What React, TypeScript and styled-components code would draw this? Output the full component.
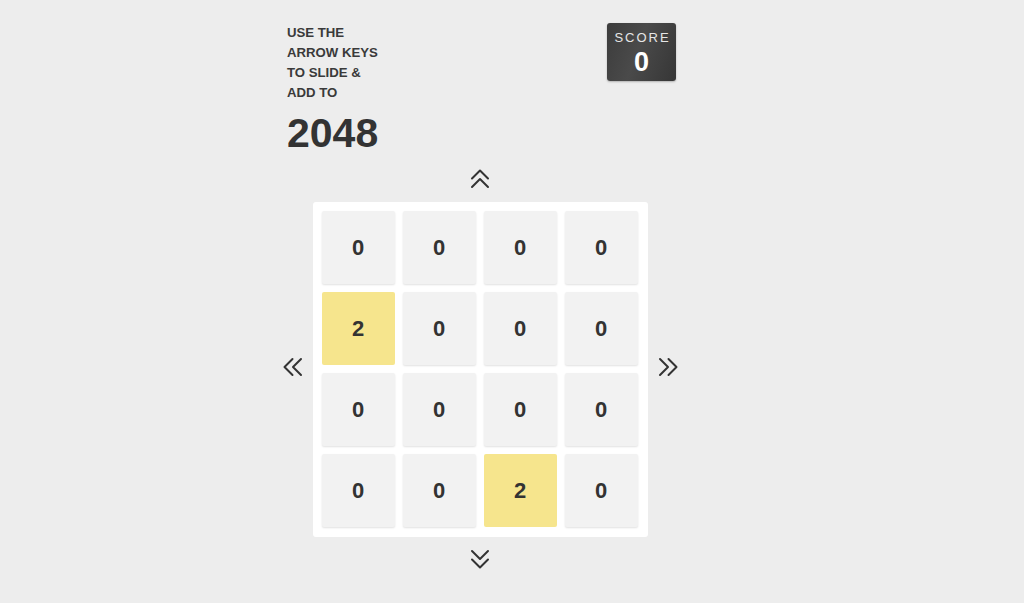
import React from 'react'
import styled, { createGlobalStyle } from 'styled-components'

const GlobalStyle = createGlobalStyle`
    body {
        margin: 0;
        background: #ededed;
        font-family: "Liberation Sans", Arial, sans-serif;
        color: #333;
    }
`

const board = [
    [0, 0, 0, 0],
    [2, 0, 0, 0],
    [0, 0, 0, 0],
    [0, 0, 2, 0],
]

type Dir = 'up' | 'down' | 'left' | 'right'

const rotation: Record<Dir, number> = { up: 0, right: 90, down: 180, left: 270 }

const Chevrons = ({ dir }: { dir: Dir }) => (
    <svg width="20" height="20" viewBox="0 0 20 20" fill="none">
        <g
            transform={`rotate(${rotation[dir]} 10 10)`}
            stroke="#333"
            strokeWidth="2"
            strokeLinecap="round"
            strokeLinejoin="round"
        >
            <path d="M2 9.5 L10 1.5 L18 9.5" />
            <path d="M2 18 L10 10 L18 18" />
        </g>
    </svg>
)

const App = () => {
    return (
        <>
            <GlobalStyle />
            <Page>
                <Header>
                    <Intro>
                        <Hint>
                            USE THE
                            <br />
                            ARROW KEYS
                            <br />
                            TO SLIDE &amp;
                            <br />
                            ADD TO
                        </Hint>
                        <Title>2048</Title>
                    </Intro>
                    <ScoreBox>
                        <ScoreLabel>SCORE</ScoreLabel>
                        <ScoreValue>0</ScoreValue>
                    </ScoreBox>
                </Header>
                <ArrowButton>
                    <Chevrons dir="up" />
                </ArrowButton>
                <MiddleRow>
                    <SideArrow>
                        <Chevrons dir="left" />
                    </SideArrow>
                    <Board>
                        {board.flat().map((value, i) => (
                            <Tile key={i} $filled={value > 0}>
                                {value}
                            </Tile>
                        ))}
                    </Board>
                    <SideArrow>
                        <Chevrons dir="right" />
                    </SideArrow>
                </MiddleRow>
                <ArrowButton>
                    <Chevrons dir="down" />
                </ArrowButton>
            </Page>
        </>
    )
}

const Page = styled.div`
    width: 396px;
    margin-left: 282px;
    padding-top: 23px;
    display: flex;
    flex-direction: column;
    align-items: center;
`

const Header = styled.div`
    align-self: stretch;
    padding: 0 2px 0 5px;
    display: flex;
    justify-content: space-between;
    align-items: flex-start;
`

const Intro = styled.div`
    display: flex;
    flex-direction: column;
`

const Hint = styled.div`
    font-size: 13.2px;
    font-weight: bold;
    line-height: 20px;
    color: #3a3a3a;
`

const Title = styled.div`
    font-size: 41px;
    font-weight: bold;
    line-height: 48px;
    margin-top: 6px;
    color: #333;
`

const ScoreBox = styled.div`
    width: 69px;
    height: 58px;
    border-radius: 3px;
    background: linear-gradient(110deg, #3c3c3c 0%, #4a4a4a 45%, #363636 100%);
    box-shadow: 0 1px 2px rgba(0, 0, 0, 0.25);
    color: #fff;
    display: flex;
    flex-direction: column;
    align-items: center;
    padding-top: 7px;
    box-sizing: border-box;
`

const ScoreLabel = styled.div`
    font-size: 13px;
    letter-spacing: 2px;
    margin-right: -2px;
    line-height: 16px;
    color: #e6e6e6;
`

const ScoreValue = styled.div`
    font-size: 27px;
    font-weight: bold;
    line-height: 32px;
`

const ArrowButton = styled.div`
    width: 20px;
    height: 20px;
    margin: 12px 0 13px;
    display: flex;
`

const MiddleRow = styled.div`
    display: flex;
    align-items: center;
    gap: 10px;
`

const SideArrow = styled.div`
    width: 20px;
    height: 20px;
    margin-bottom: 5px;
    display: flex;
`

const Board = styled.div`
    width: 335px;
    height: 335px;
    box-sizing: border-box;
    padding: 9px 10px 10px 9px;
    background: #fff;
    border-radius: 3px;
    display: grid;
    grid-template-columns: repeat(4, 73px);
    grid-template-rows: repeat(4, 73px);
    gap: 8px;
`

const Tile = styled.div<{ $filled: boolean }>`
    background: ${(p) => (p.$filled ? '#f6e58d' : '#f2f2f2')};
    border-radius: 2px;
    box-shadow: ${(p) => (p.$filled ? 'none' : '0 1px 2px rgba(0, 0, 0, 0.12)')};
    display: flex;
    align-items: center;
    justify-content: center;
    font-size: 22px;
    font-weight: bold;
    color: #333;
`

export default App
